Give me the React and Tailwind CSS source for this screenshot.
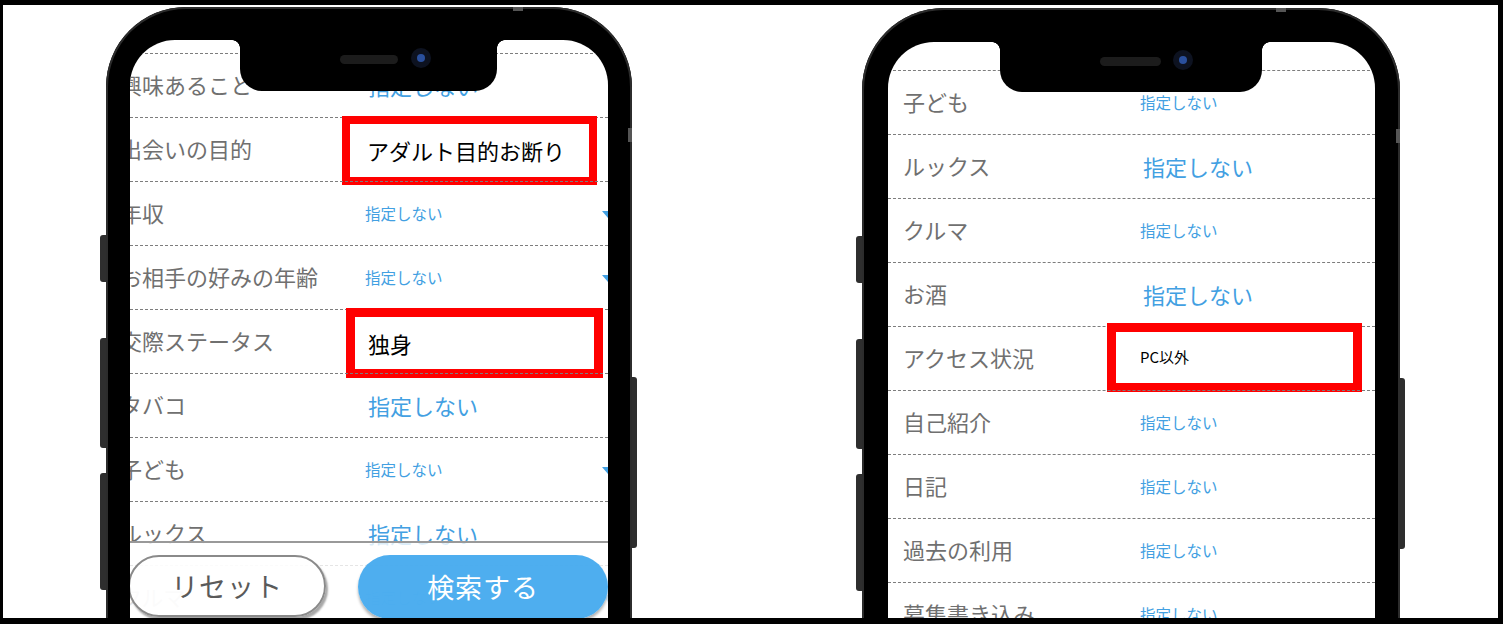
import React from 'react';

const leftRows = [
  { label: '興味あること', lg: true },
  {
    label: '出会いの目的',
    box: 'left-[212px] top-[-2px] h-[69px] w-[255px] border-[8px] pl-[17px] text-[22px]',
    boxText: 'アダルト目的お断り',
  },
  { label: '年収', arrow: true },
  { label: 'お相手の好みの年齢', arrow: true },
  {
    label: '交際ステータス',
    box: 'left-[216px] top-[-2px] h-[70px] w-[257px] border-[9px] pl-[13px] text-[22px]',
    boxText: '独身',
  },
  { label: 'タバコ', lg: true },
  { label: '子ども', arrow: true },
  { label: 'ルックス', lg: true },
  { label: 'クルマ', arrow: true },
];

const rightRows = [
  { label: '子ども' },
  { label: 'ルックス', lg: true },
  { label: 'クルマ' },
  { label: 'お酒', lg: true },
  {
    label: 'アクセス状況',
    box: 'left-[219px] top-[-4px] h-[69px] w-[255px] border-[9px] pl-[24px] text-[15px]',
    boxText: 'PC以外',
  },
  { label: '自己紹介' },
  { label: '日記' },
  { label: '過去の利用' },
  { label: '募集書き込み' },
];

function Row({ r, labelCls }) {
  return (
    <div className="relative flex h-[64px] shrink-0 items-center border-t border-dashed border-[#7d7d7d]">
      <div className={`${labelCls} shrink-0 whitespace-nowrap pb-[2px] text-[22px] text-[#707070]`}>{r.label}</div>
      {r.box ? (
        <div className={`absolute flex items-center whitespace-nowrap border-[#ff0000] bg-white text-black ${r.box}`}>
          {r.boxText}
        </div>
      ) : (
        <div className={`whitespace-nowrap text-[#42a0e2] ${r.lg ? 'pl-[3px] text-[22px]' : 'text-[15.5px]'}`}>
          指定しない
        </div>
      )}
      {r.arrow && (
        <div className="absolute right-[-6px] top-[29px] h-0 w-0 border-x-[6px] border-t-[7px] border-x-transparent border-t-[#42a0e2]" />
      )}
    </div>
  );
}

function Notch({ cls, speakerCls, cameraCls }) {
  return (
    <div className={`absolute top-0 ${cls}`}>
      {/* little flares where the notch meets the top edge */}
      <div className="absolute left-[-8px] top-0 h-[8px] w-[8px] bg-[radial-gradient(circle_at_0_100%,transparent_7.5px,black_8px)]" />
      <div className="absolute right-[-8px] top-0 h-[8px] w-[8px] bg-[radial-gradient(circle_at_100%_100%,transparent_7.5px,black_8px)]" />
      <div className={`absolute h-[9px] rounded-full bg-[#1c1c1c] ${speakerCls}`} />
      <div className={`absolute flex h-[20px] w-[20px] items-center justify-center rounded-full bg-[#0d1220] ${cameraCls}`}>
        <div className="h-[8px] w-[8px] rounded-full bg-[#2a4f9c]" />
      </div>
    </div>
  );
}

function SideButtons({ side }) {
  if (side === 'left') {
    return (
      <>
        <div className="absolute left-[-6px] top-[228px] h-[47px] w-[6px] rounded-l-[3px] bg-[#2e2e2e]" />
        <div className="absolute left-[-6px] top-[331px] h-[110px] w-[6px] rounded-l-[3px] bg-[#2e2e2e]" />
        <div className="absolute left-[-6px] top-[466px] h-[117px] w-[6px] rounded-l-[3px] bg-[#2e2e2e]" />
      </>
    );
  }
  return <div className="absolute right-[-5px] top-[370px] h-[171px] w-[5px] rounded-r-[3px] bg-[#2e2e2e]" />;
}

export default function App() {
  return (
    <div className="flex h-[624px] w-[1503px] items-start overflow-hidden border-b-[6px] border-l-[3px] border-r-[5px] border-t-[5px] border-black bg-white font-['Noto_Sans_CJK_JP','Noto_Sans',sans-serif]">
      {/* left phone */}
      <div className="relative ml-[103px] mt-[2px] h-[700px] w-[526px] shrink-0 rounded-t-[80px] bg-black px-[24px] pt-[33px] shadow-[inset_0_0_0_2px_#2c2c2c]">
        <SideButtons side="left" />
        <SideButtons side="right" />
        <div className="absolute right-0 top-[121px] h-[14px] w-[4px] bg-[#555]" />
        <div className="absolute left-[407px] top-0 h-[4px] w-[10px] bg-[#555]" />
        <div className="relative h-full w-[478px] overflow-hidden rounded-t-[45px] bg-white">
          <div className="flex flex-col pt-[13px]">
            {leftRows.map((r, i) => (
              <Row key={i} r={r} labelCls="ml-[-10px] w-[245px]" />
            ))}
          </div>
          {/* bottom action bar over the list */}
          <div className="absolute left-0 right-0 top-[501px] h-[200px] border-t-2 border-[#999] bg-white/80">
            <div className="flex items-start pt-[12px]">
              <div className="ml-[-2px] flex h-[62px] w-[200px] items-center justify-center rounded-full border-2 border-[#8a8a8a] bg-white/85 text-[27px] tracking-[1px] text-[#5a5a5a] shadow-[2px_3px_2px_rgba(0,0,0,0.35)]">
                リセット
              </div>
              <div className="ml-[32px] flex h-[64px] w-[252px] items-center justify-center rounded-full bg-[#44aaee]/95 text-[27px] tracking-[1px] text-white shadow-[0_3px_3px_rgba(0,0,0,0.3)]">
                検索する
              </div>
            </div>
          </div>
          <Notch cls="left-[110px] h-[51px] w-[257px] rounded-b-[22px] bg-black" speakerCls="left-[100px] top-[15px] w-[58px]" cameraCls="left-[171px] top-[8px]" />
        </div>
      </div>

      {/* right phone */}
      <div className="relative ml-[230px] mt-[3px] h-[700px] w-[538px] shrink-0 rounded-t-[82px] bg-black pl-[26px] pr-[25px] pt-[34px] shadow-[inset_0_0_0_2px_#2c2c2c]">
        <SideButtons side="left" />
        <SideButtons side="right" />
        <div className="absolute right-0 top-[121px] h-[14px] w-[4px] bg-[#555]" />
        <div className="absolute left-[414px] top-0 h-[4px] w-[10px] bg-[#555]" />
        <div className="relative h-full w-[487px] overflow-hidden rounded-t-[46px] bg-white">
          <div className="flex flex-col pt-[28px]">
            {rightRows.map((r, i) => (
              <Row key={i} r={r} labelCls="ml-[15px] w-[237px]" />
            ))}
          </div>
          <Notch cls="left-[112px] h-[50px] w-[262px] rounded-b-[22px] bg-black" speakerCls="left-[100px] top-[15px] w-[61px]" cameraCls="left-[173px] top-[8px]" />
        </div>
      </div>
    </div>
  );
}
